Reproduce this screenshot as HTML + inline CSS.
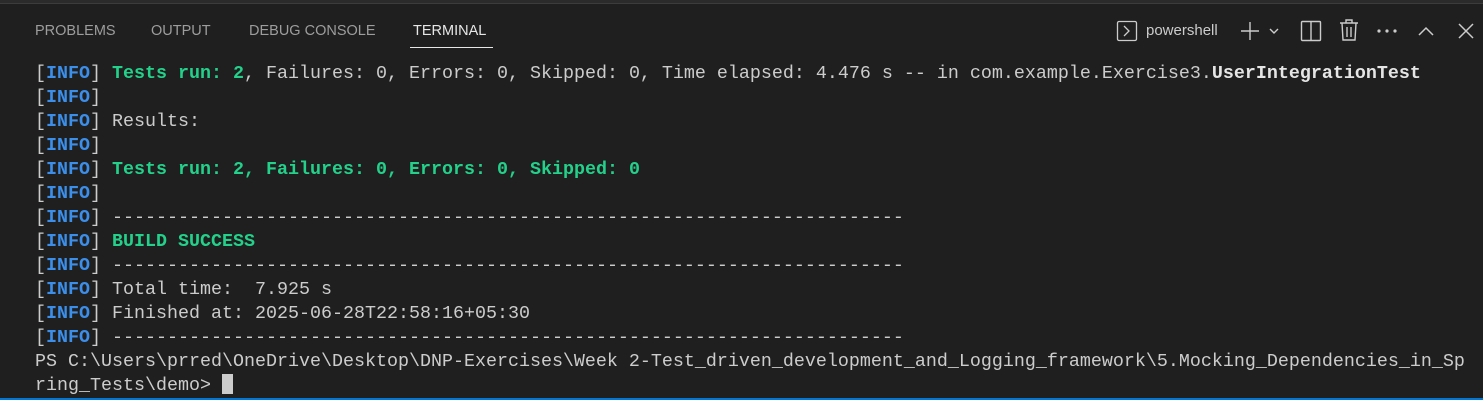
<!DOCTYPE html>
<html><head><style>
html,body{margin:0;padding:0;width:1483px;height:400px;background:#1f1f1f;overflow:hidden;position:relative}
.top{position:absolute;left:0;top:0;width:1483px;height:3px;background:#2b2b2b;border-bottom:1px solid #3c3c3c}
.tabs{position:absolute;top:23px;font:14.5px "Liberation Sans",sans-serif;color:#9d9d9d}
.tab{position:absolute;white-space:nowrap}
.act{color:#e7e7e7}
.ul{position:absolute;left:410px;top:47px;width:83px;height:1px;background:#e7e7e7}
.term{position:absolute;left:35px;top:62px;font:18.33px/24px "Liberation Mono",monospace;color:#cccccc;white-space:pre}
.b{color:#3b8eea;font-weight:bold}
.g{color:#23d18b;font-weight:bold}
.w{color:#e5e5e5;font-weight:bold}
.k{color:#cccccc}
.cur{display:inline-block;width:11px;height:20px;background:#cccccc;vertical-align:-4px}
.bot{position:absolute;left:0;top:398px;width:1483px;height:2px;background:#0078d4}
svg{position:absolute}
</style></head><body>
<div class="top"></div>
<div class="tabs">
<span class="tab" style="left:35px">PROBLEMS</span>
<span class="tab" style="left:151px">OUTPUT</span>
<span class="tab" style="left:249px">DEBUG CONSOLE</span>
<span class="tab act" style="left:413px">TERMINAL</span>
</div>
<div class="ul"></div>
<svg style="left:1116px;top:20px" width="22" height="22" viewBox="0 0 22 22" fill="none" stroke="#cccccc" stroke-width="1.3"><rect x="1.5" y="1.5" width="19" height="19" rx="1.5"/><path d="M8 6l5 5-5 5"/></svg>
<div style="position:absolute;left:1146px;top:22px;font:15px 'Liberation Sans',sans-serif;color:#cccccc">powershell</div>
<svg style="left:1239px;top:20px" width="44" height="22" viewBox="0 0 44 22" fill="none" stroke="#cccccc" stroke-width="1.4"><path d="M11 2v18M2 11h18"/><path d="M31 9l4 4 4-4"/></svg>
<svg style="left:1300px;top:20px" width="22" height="22" viewBox="0 0 22 22" fill="none" stroke="#cccccc" stroke-width="1.4"><rect x="1.5" y="1.5" width="19" height="19" rx="1"/><path d="M11 1.5v19"/></svg>
<svg style="left:1338px;top:18px" width="22" height="24" viewBox="0 0 22 24" fill="none" stroke="#cccccc" stroke-width="1.4"><path d="M2 5h18M8 5V2h6v3M4 5l1 17h12l1-17M9 9v10M13 9v10"/></svg>
<svg style="left:1376px;top:27px" width="22" height="8"><circle cx="3" cy="4" r="1.6" fill="#ccc"/><circle cx="11" cy="4" r="1.6" fill="#ccc"/><circle cx="19" cy="4" r="1.6" fill="#ccc"/></svg>
<svg style="left:1416px;top:21px" width="20" height="20" fill="none" stroke="#cccccc" stroke-width="1.5"><path d="M3 14l7-7 7 7"/></svg>
<svg style="left:1456px;top:21px" width="20" height="20" fill="none" stroke="#cccccc" stroke-width="1.5"><path d="M3 3l14 14M17 3L3 17"/></svg>
<div class="term"><span class="k">[</span><span class="b">INFO</span>] <span class="g">Tests run: 2</span>, Failures: 0, Errors: 0, Skipped: 0, Time elapsed: 4.476 s -- in com.example.Exercise3.<span class="w">UserIntegrationTest</span>
[<span class="b">INFO</span>]
[<span class="b">INFO</span>] Results:
[<span class="b">INFO</span>]
[<span class="b">INFO</span>] <span class="g">Tests run: 2, Failures: 0, Errors: 0, Skipped: 0</span>
[<span class="b">INFO</span>]
[<span class="b">INFO</span>] ------------------------------------------------------------------------
[<span class="b">INFO</span>] <span class="g">BUILD SUCCESS</span>
[<span class="b">INFO</span>] ------------------------------------------------------------------------
[<span class="b">INFO</span>] Total time:  7.925 s
[<span class="b">INFO</span>] Finished at: 2025-06-28T22:58:16+05:30
[<span class="b">INFO</span>] ------------------------------------------------------------------------
PS C:\Users\prred\OneDrive\Desktop\DNP-Exercises\Week 2-Test_driven_development_and_Logging_framework\5.Mocking_Dependencies_in_Sp
ring_Tests\demo&gt; <span class="cur"></span></div>
<div class="bot"></div>
</body></html>
